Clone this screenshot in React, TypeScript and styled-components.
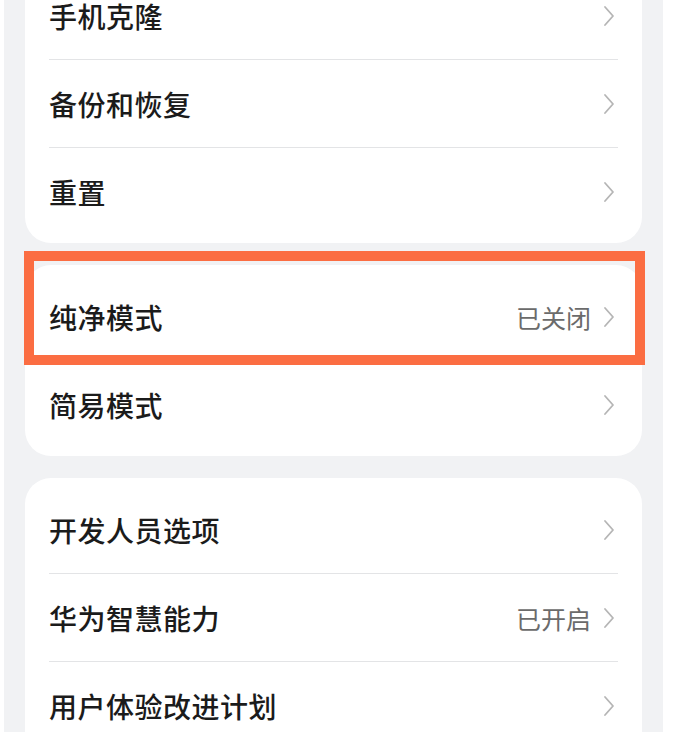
import styled, { createGlobalStyle } from "styled-components";

const GlobalStyle = createGlobalStyle`
  html, body {
    margin: 0;
    padding: 0;
    background: #ffffff;
  }
  body {
    font-family: "Noto Sans CJK SC", "Noto Sans", sans-serif;
  }
`;

const Screen = styled.div`
  width: 687px;
  height: 732px;
  overflow: hidden;
  background: #ffffff;
  display: flex;
`;

const Panel = styled.div`
  margin-left: 4px;
  width: 659px;
  height: 100%;
  background: #f1f2f4;
  box-sizing: border-box;
  padding: 0 21px;
  display: flex;
  flex-direction: column;
  gap: 22px;
`;

const Card = styled.section<{ offset?: number }>`
  position: relative;
  background: #ffffff;
  border-radius: 26px;
  padding: 8px 24px 8px 24px;
  margin-top: ${(p) => (p.offset ? `${p.offset}px` : "0")};
  flex-shrink: 0;
`;

const Row = styled.div`
  height: 87px;
  display: flex;
  align-items: center;
  justify-content: space-between;
  & + & {
    border-top: 1px solid #e3e4e6;
  }
`;

const Label = styled.span`
  font-size: 28px;
  font-weight: 500;
  color: #1b1b1b;
  letter-spacing: 0.5px;
`;

const Trail = styled.div`
  display: flex;
  align-items: center;
  gap: 12px;
  margin-right: 3px;
`;

const Value = styled.span`
  font-size: 25px;
  color: #6b6b6b;
`;

const Highlight = styled.div`
  position: absolute;
  left: -1px;
  top: -14px;
  width: 621px;
  height: 114px;
  box-sizing: border-box;
  border: 10px solid #fb6d42;
  pointer-events: none;
`;

const Chevron = () => (
  <svg width="12" height="22" viewBox="0 0 12 22" fill="none">
    <path
      d="M2 2 L10 11 L2 20"
      stroke="#b5b5b5"
      strokeWidth="1.8"
      strokeLinecap="round"
      strokeLinejoin="round"
    />
  </svg>
);

type Item = { label: string; value?: string };

const SettingRow = ({ label, value }: Item) => (
  <Row>
    <Label>{label}</Label>
    <Trail>
      {value && <Value>{value}</Value>}
      <Chevron />
    </Trail>
  </Row>
);

const groupOne: Item[] = [
  { label: "手机克隆" },
  { label: "备份和恢复" },
  { label: "重置" },
];

const groupTwo: Item[] = [
  { label: "纯净模式", value: "已关闭" },
  { label: "简易模式" },
];

const groupThree: Item[] = [
  { label: "开发人员选项" },
  { label: "华为智慧能力", value: "已开启" },
  { label: "用户体验改进计划" },
];

export default function App() {
  return (
    <>
      <GlobalStyle />
      <Screen>
        <Panel>
          <Card offset={-36}>
            {groupOne.map((it) => (
              <SettingRow key={it.label} {...it} />
            ))}
          </Card>
          <Card>
            {groupTwo.map((it) => (
              <SettingRow key={it.label} {...it} />
            ))}
            <Highlight />
          </Card>
          <Card>
            {groupThree.map((it) => (
              <SettingRow key={it.label} {...it} />
            ))}
          </Card>
        </Panel>
      </Screen>
    </>
  );
}
